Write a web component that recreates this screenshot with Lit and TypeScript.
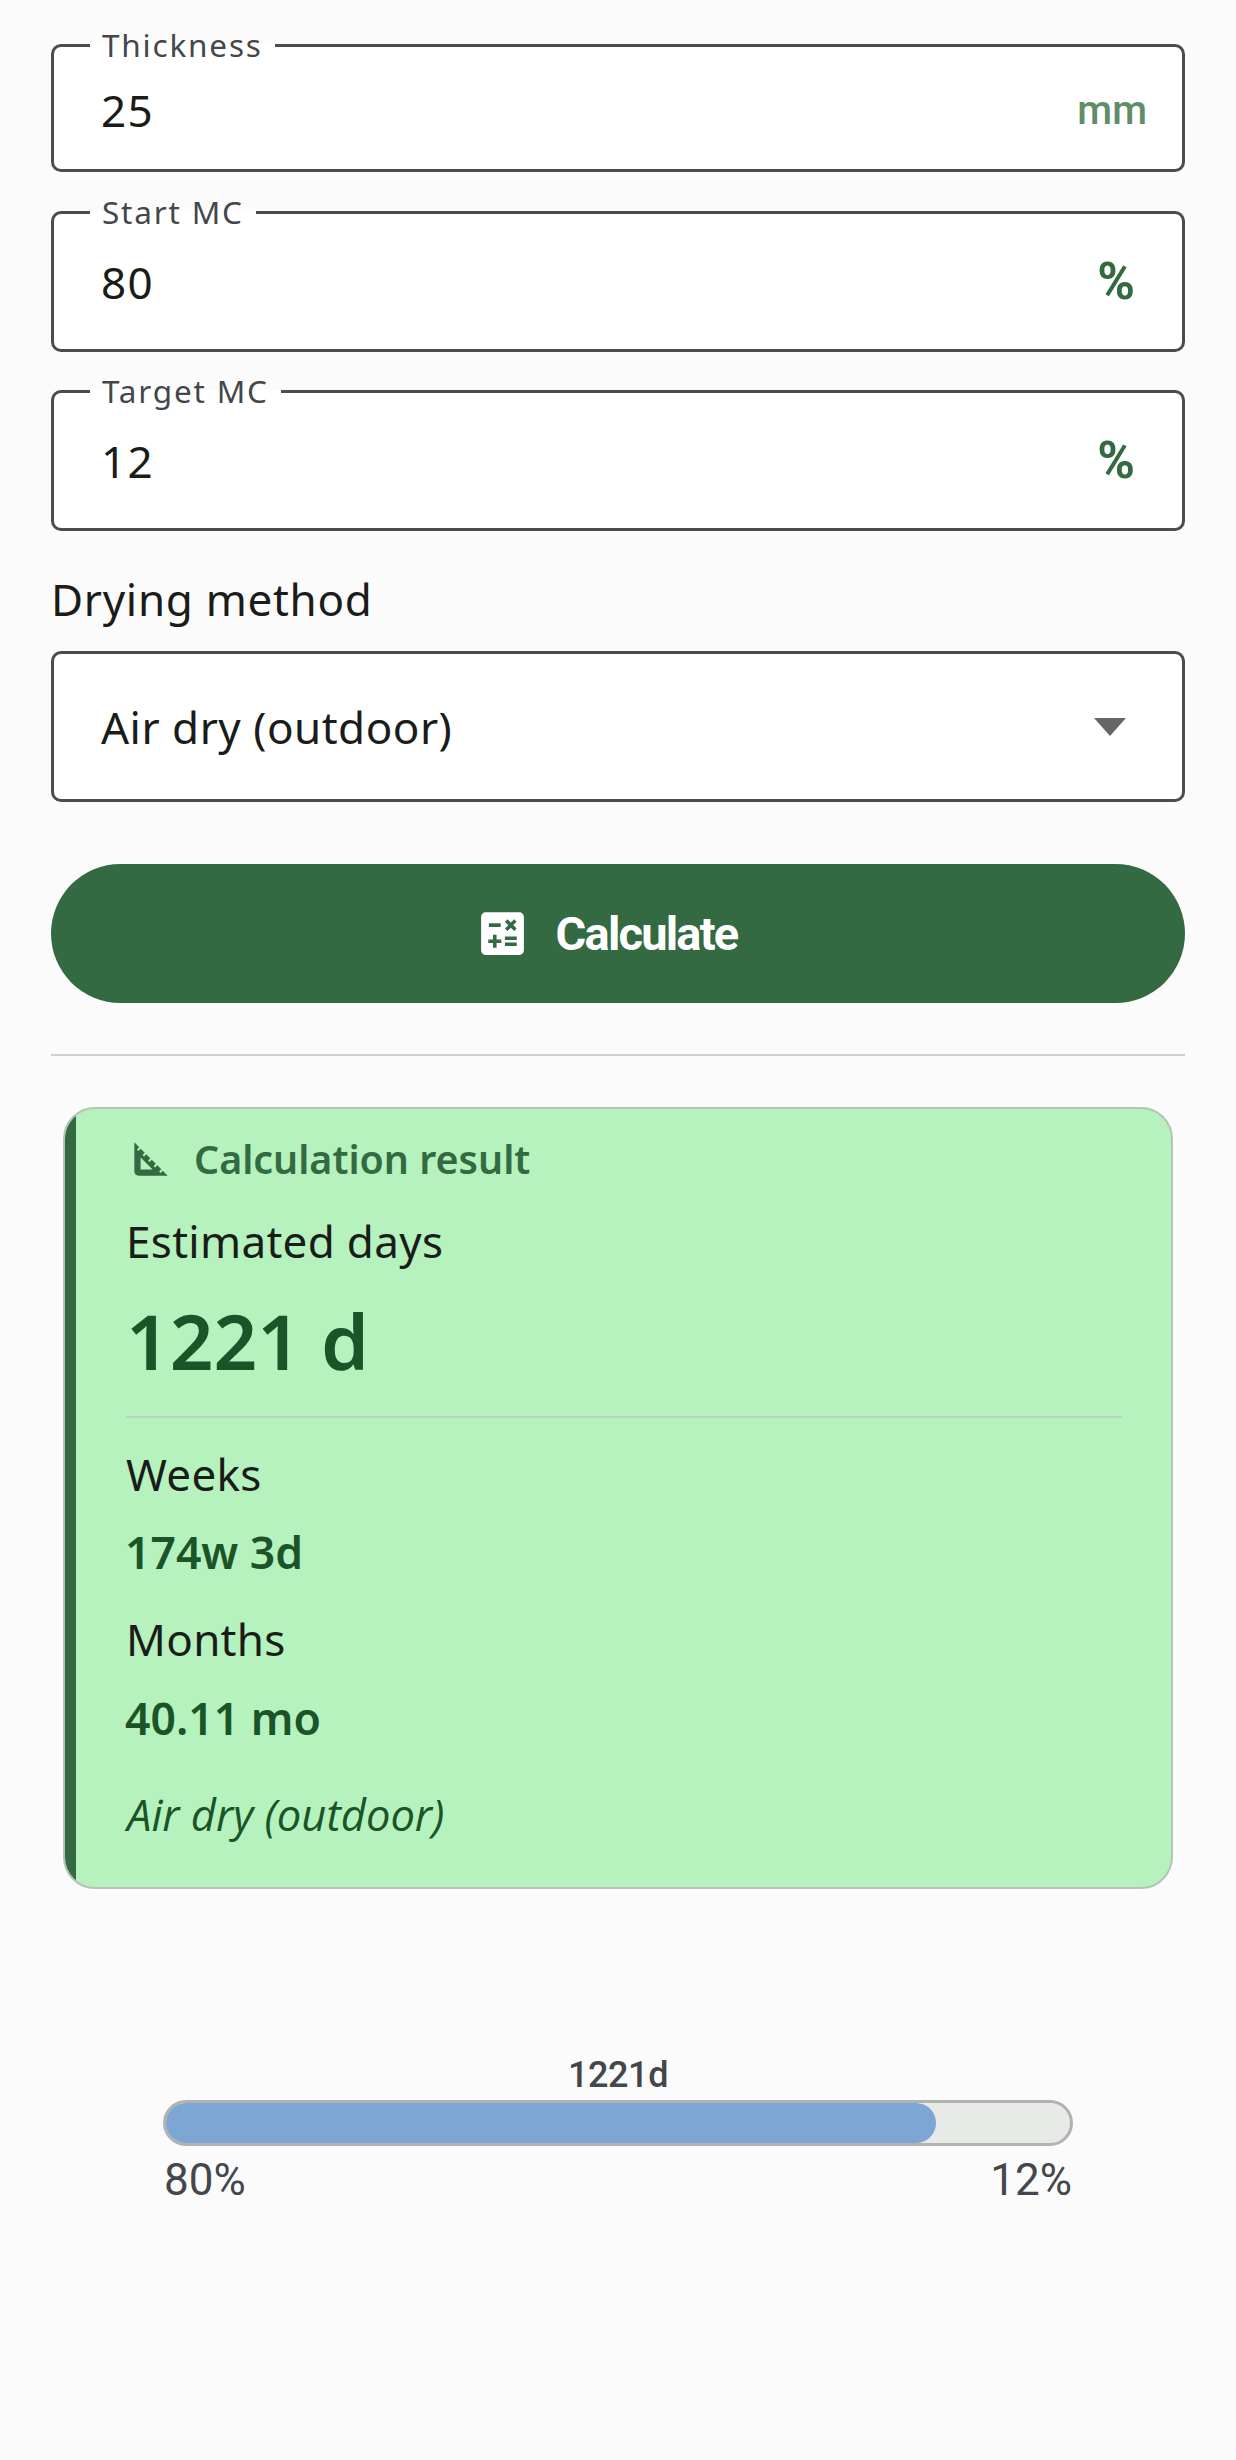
import { LitElement, html, css } from "lit";
import { customElement } from "lit/decorators.js";

@customElement("app-root")
export class AppRoot extends LitElement {
  static styles = css`
    :host { display: block; min-height: 2460px; background: #fbfbfb; font-family: "Noto Sans", sans-serif; color: #1a1c1a; overflow: hidden; }
    .page { padding: 29.5px 51px 0; display: flex; flex-direction: column; }
    fieldset { margin: 0; padding: 0 48px 0 47px; border: 3px solid #4a4d50; border-radius: 10px; background: #fff; display: block; box-sizing: border-box; }
    legend { margin-left: -11px; padding: 0 12px 3px; font-size: 31.5px; line-height: 29px; letter-spacing: 1.8px; color: #44474a; }
    .row { display: flex; justify-content: space-between; align-items: center; }
    .f1 { height: 142.5px; margin-bottom: 24.5px; }
    .f1 .row { height: 97px; }
    .f2 { height: 155.5px; margin-bottom: 23.5px; }
    .f2 .row { height: 107px; }
    .f2:last-of-type { margin-bottom: 22px; }
    .val { font-size: 44px; letter-spacing: 1.4px; }
    .suf-mm { font-family: Roboto, sans-serif; font-size: 40px; font-weight: 500; color: #5f8d69; margin-right: -13px; }
    .suf-p { font-family: Roboto, sans-serif; font-size: 51px; line-height: 50px; font-weight: 700; color: #336a42; margin-right: -1px; }
    .drylabel { margin-top: 16px; font-size: 44px; line-height: 60px; letter-spacing: .7px; }
    .select { margin-top: 22px; height: 151px; box-sizing: border-box; border: 3px solid #4a4d50; border-radius: 10px; background: #fff; display: flex; align-items: center; justify-content: space-between; padding: 0 56px 0 47px; font-size: 44px; letter-spacing: .5px; }
    .select svg { display: block; width: 32px; height: 18px; }
    .btn { margin-top: 62px; height: 139px; border-radius: 70px; background: #336a42; color: #fff; display: flex; align-items: center; justify-content: center; gap: 25px; padding-right: 25px; font-family: Roboto, sans-serif; font-weight: 700; font-size: 47px; letter-spacing: -1.8px; }
    .btn svg { width: 57px; height: 57px; fill: #fff; display: block; }
    .hr { margin-top: 51px; height: 2px; background: #cfd0cf; }
    .card { margin: 51px 12px 0; height: 782px; box-sizing: border-box; border: 2px solid #b5c4b5; border-radius: 32px; background: #b5f2bd; overflow: hidden; display: flex; }
    .inner { flex: 1; border-left: 11px solid #336a42; padding: 19px 49px 0 50px; display: flex; flex-direction: column; }
    .head { display: flex; align-items: center; height: 62px; gap: 18px; color: #336a42; font-size: 39.4px; font-weight: 600; }
    .head svg { width: 50px; height: 50px; fill: #336a42; display: block; }
    .lab { font-size: 44px; line-height: 60px; letter-spacing: .3px; }
    .big { font-size: 76.5px; line-height: 100px; font-weight: 600; color: #1b5428; margin-top: 19px; }
    .cdiv { height: 2px; background: #bfcfc0; margin: 26px 0 26px; }
    .sub { font-size: 44.5px; line-height: 60px; font-weight: 600; color: #1b5428; margin-top: 18px; margin-left: -1px; }
    .gap { margin-top: 27px; }
    .sub2 { margin-top: 19px; }
    .note { margin-top: 41px; margin-left: 1px; font-family: "Open Sans", "Noto Sans", sans-serif; font-size: 43.5px; line-height: 52px; font-style: italic; color: #1b5428; }
    .gauge { margin: 166px 112px 0; font-family: Roboto, sans-serif; color: #44474a; display: flex; flex-direction: column; }
    .gt { text-align: center; font-size: 36px; font-weight: 500; line-height: 40px; letter-spacing: -.4px; }
    .track { margin-top: 5px; height: 46px; box-sizing: border-box; border: 3px solid #b0b3b0; border-radius: 23px; background: #e8eae7; overflow: hidden; }
    .fill { height: 100%; background: #7ea6d4; border-radius: 0 20px 20px 0; }
    .ends { display: flex; justify-content: space-between; font-size: 44px; line-height: 50px; margin-top: 9px; padding: 0 1px; }
  `;
  field(label: string, value: string, suffix: string, cls: string, sufCls: string) {
    return html`<fieldset class=${cls}><legend>${label}</legend><div class="row"><span class="val">${value}</span><span class=${sufCls}>${suffix}</span></div></fieldset>`;
  }
  render() {
    return html`<div class="page">
      ${this.field("Thickness", "25", "mm", "f1", "suf-mm")}
      ${this.field("Start MC", "80", "%", "f2", "suf-p")}
      ${this.field("Target MC", "12", "%", "f2", "suf-p")}
      <div class="drylabel">Drying method</div>
      <div class="select"><span>Air dry (outdoor)</span><svg viewBox="0 0 32 18"><path d="M0 0h32L16 18z" fill="#666"/></svg></div>
      <div class="btn"><svg viewBox="0 0 24 24"><path d="M19 3H5c-1.1 0-2 .9-2 2v14c0 1.1.9 2 2 2h14c1.1 0 2-.9 2-2V5c0-1.1-.9-2-2-2zm-5.97 4.06L14.09 6l1.41 1.41L16.91 6l1.06 1.06-1.41 1.41 1.41 1.41-1.06 1.06-1.41-1.4-1.41 1.41-1.06-1.06 1.41-1.41-1.41-1.42zm-6.78.66h5v1.5h-5v-1.5zM11.5 16h-2v2H8v-2H6v-1.5h2v-2h1.5v2h2V16zm6.5 1.25h-5v-1.5h5v1.5zm0-2.5h-5v-1.5h5v1.5z"/></svg><span>Calculate</span></div>
      <div class="hr"></div>
      <div class="card"><div class="inner">
        <div class="head"><svg viewBox="0 0 24 24"><path d="M17.66 17.66l-1.06 1.06-.71-.71 1.06-1.06-1.94-1.94-1.06 1.06-.71-.71 1.06-1.06-1.94-1.94-1.06 1.06-.71-.71 1.06-1.06L9.7 9.7l-1.06 1.06-.71-.71 1.06-1.06-1.94-1.94-1.06 1.06-.71-.71 1.06-1.06L4 4v14c0 1.1.9 2 2 2h14l-2.34-2.34zM7 17v-5.76L12.76 17H7z"/></svg><span>Calculation result</span></div>
        <div class="lab" style="margin-top:21px">Estimated days</div>
        <div class="big">1221 d</div>
        <div class="cdiv"></div>
        <div class="lab">Weeks</div>
        <div class="sub">174w 3d</div>
        <div class="lab gap">Months</div>
        <div class="sub sub2">40.11 mo</div>
        <div class="note">Air dry (outdoor)</div>
      </div></div>
      <div class="gauge">
        <div class="gt">1221d</div>
        <div class="track"><div class="fill" style="width:85.2%"></div></div>
        <div class="ends"><span>80%</span><span>12%</span></div>
      </div>
    </div>`;
  }
}
